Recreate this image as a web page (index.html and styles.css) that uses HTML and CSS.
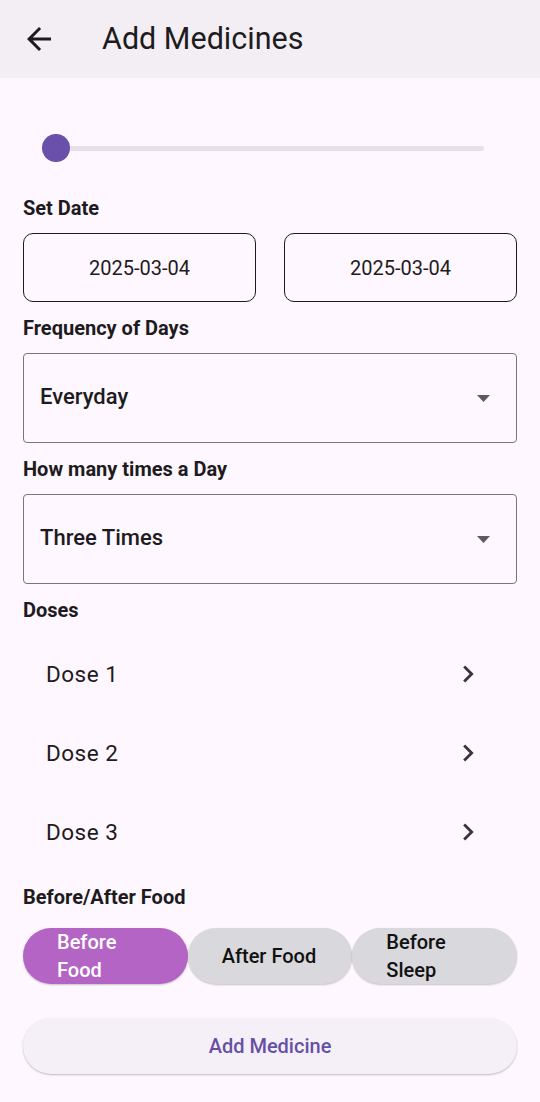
FILE: index.html
```html
<!DOCTYPE html>
<html lang="en">
<head>
<meta charset="utf-8">
<title>Add Medicines</title>
<link rel="stylesheet" href="styles.css">
</head>
<body>
<header class="appbar">
  <span class="back">
    <svg viewBox="0 0 24 24" width="36" height="36"><path d="M20 11H7.83l5.59-5.59L12 4l-8 8 8 8 1.41-1.41L7.83 13H20v-2z" fill="#1d1b20"/></svg>
  </span>
  <h1 class="title">Add Medicines</h1>
</header>
<main class="content">
  <div class="slider">
    <div class="track"></div>
    <div class="thumb"></div>
  </div>

  <section class="field first">
    <div class="label">Set Date</div>
    <div class="dates">
      <div class="date">2025-03-04</div>
      <div class="date">2025-03-04</div>
    </div>
  </section>

  <section class="field">
    <div class="label">Frequency of Days</div>
    <div class="dropdown">
      <span class="dd-text">Everyday</span>
      <svg class="dd-arrow" viewBox="0 0 13 7" width="13" height="7"><path d="M0 0h13L6.5 7z" fill="#5d5961"/></svg>
    </div>
  </section>

  <section class="field">
    <div class="label">How many times a Day</div>
    <div class="dropdown">
      <span class="dd-text">Three Times</span>
      <svg class="dd-arrow" viewBox="0 0 13 7" width="13" height="7"><path d="M0 0h13L6.5 7z" fill="#5d5961"/></svg>
    </div>
  </section>

  <section class="field">
    <div class="label">Doses</div>
    <ul class="doses">
      <li class="dose"><span>Dose 1</span><svg viewBox="0 0 24 24" width="34" height="34"><path d="M10 6L8.59 7.41 13.17 12l-4.58 4.59L10 18l6-6z" fill="#38353c"/></svg></li>
      <li class="dose"><span>Dose 2</span><svg viewBox="0 0 24 24" width="34" height="34"><path d="M10 6L8.59 7.41 13.17 12l-4.58 4.59L10 18l6-6z" fill="#38353c"/></svg></li>
      <li class="dose"><span>Dose 3</span><svg viewBox="0 0 24 24" width="34" height="34"><path d="M10 6L8.59 7.41 13.17 12l-4.58 4.59L10 18l6-6z" fill="#38353c"/></svg></li>
    </ul>
  </section>

  <section class="field">
    <div class="label">Before/After Food</div>
    <div class="pills">
      <div class="pill active">Before Food</div>
      <div class="pill">After Food</div>
      <div class="pill">Before Sleep</div>
    </div>
  </section>

  <div class="add-btn">Add Medicine</div>
</main>
</body>
</html>
```

FILE: styles.css
```css
* { box-sizing: border-box; }
html, body { margin: 0; padding: 0; }
body {
  background: #fef7ff;
  font-family: Roboto, "Noto Sans", sans-serif;
  color: #1d1b20;
  width: 540px;
  min-height: 1102px;
}
.appbar {
  height: 78px;
  background: #f2eef4;
  display: flex;
  align-items: center;
  padding-left: 21px;
}
.back { display: flex; width: 36px; height: 36px; }
.title {
  margin: 0 0 0 45px;
  font-size: 30.5px;
  font-weight: 400;
  line-height: 40px;
  color: #1d1b20;
}
.content { padding: 0 23px; }
.slider {
  position: relative;
  height: 40px;
  margin-top: 50px;
  margin-left: 19px;
  margin-right: 33px;
  display: flex;
  align-items: center;
}
.track {
  flex: 1;
  height: 5px;
  margin-left: 14px;
  border-radius: 3px;
  background: #e6e0ea;
}
.thumb {
  position: absolute;
  left: 0;
  top: 6px;
  width: 28px;
  height: 28px;
  border-radius: 50%;
  background: #6a50aa;
}
.field { margin-top: 14px; }
.field.first { margin-top: 28px; }
.label {
  font-size: 20px;
  font-weight: 700;
  line-height: 24px;
  margin-bottom: 13px;
  color: #1d1b20;
}
.dates {
  display: grid;
  grid-template-columns: 1fr 1fr;
  column-gap: 28px;
}
.date {
  height: 69px;
  border: 1.5px solid #1d1b20;
  border-radius: 10px;
  display: flex;
  align-items: center;
  justify-content: center;
  font-size: 20px;
}
.dropdown {
  height: 90px;
  border: 1px solid #79747e;
  border-radius: 4px;
  display: flex;
  align-items: center;
  justify-content: space-between;
  padding: 0 26px 4px 16px;
}
.dd-text { font-size: 22px; font-weight: 500; }
.dd-arrow { margin-top: 4px; }
.doses { list-style: none; margin: -1px 0 0; padding: 0; }
.dose {
  height: 79px;
  display: flex;
  align-items: center;
  justify-content: space-between;
  padding: 0 32px 0 23px;
  font-size: 22.5px;
  letter-spacing: 0.5px;
}
.dose svg { display: block; }
.pills {
  display: flex;
  margin-top: 19px;
}
.pill {
  flex: 1;
  height: 56px;
  border-radius: 28px;
  background: #d9d8dc;
  display: flex;
  align-items: center;
  padding: 0 30px 0 34px;
  font-size: 20px;
  font-weight: 500;
  line-height: 28px;
  color: #111;
  box-shadow: 0 1px 2px rgba(0,0,0,0.22);
}
.pill.active { background: #b464c4; color: #fff; }
.add-btn {
  margin-top: 34px;
  height: 56px;
  border-radius: 28px;
  background: #f5f0f8;
  box-shadow: 0 1px 2px rgba(0,0,0,0.25);
  display: flex;
  align-items: center;
  justify-content: center;
  font-size: 20px;
  font-weight: 500;
  color: #6750a4;
}
```
